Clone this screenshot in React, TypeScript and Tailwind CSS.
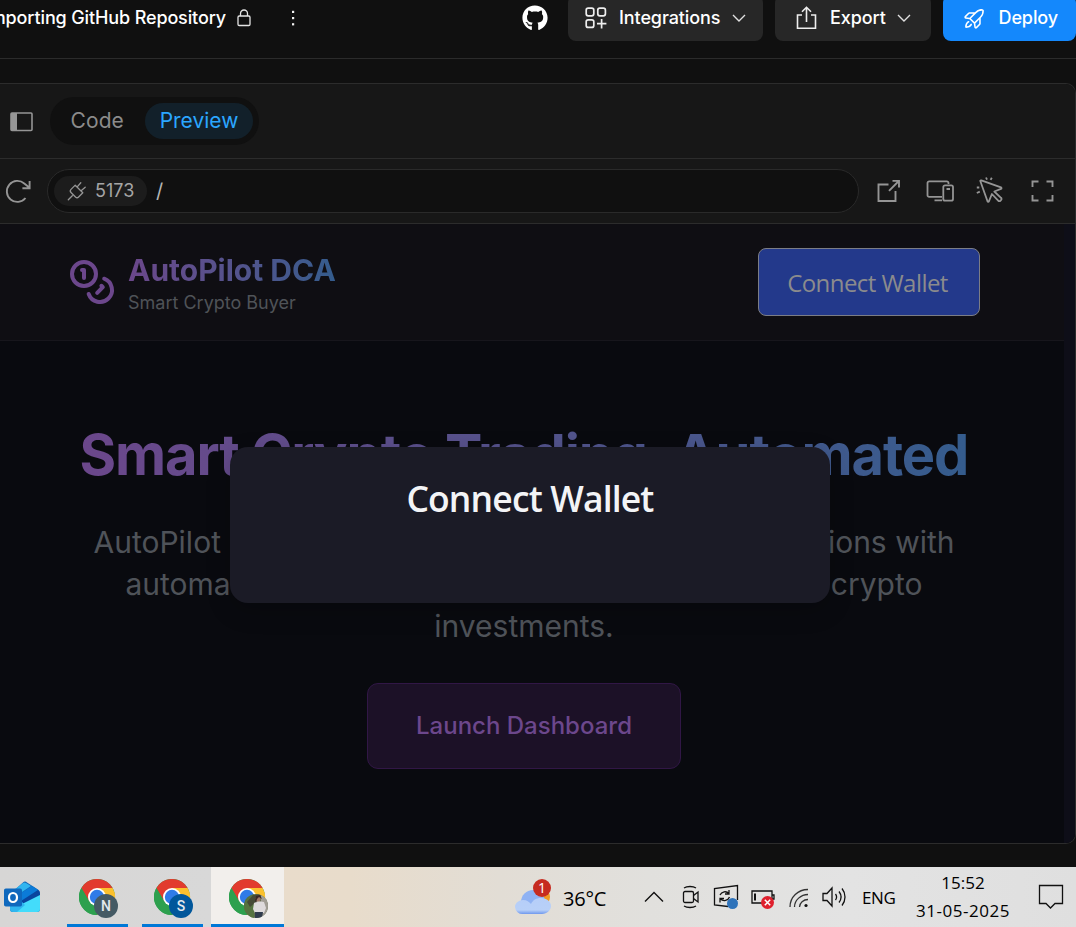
import React from "react";
import { Coins } from "lucide-react";
import { FaGithub } from "react-icons/fa";
import { PiRocketLaunch } from "react-icons/pi";

const ui = "font-['Inter',sans-serif]";
const sys = "font-['Open_Sans','Noto_Sans',sans-serif]";

function Chevron({ className }: { className: string }) {
  return (
    <svg className={className} width="14" height="8" viewBox="0 0 14 8" fill="none" stroke="#e0e0e0" strokeWidth="1.4">
      <path d="M1 1l6 6 6-6" />
    </svg>
  );
}

function Header() {
  return (
    <header className="h-[59px] overflow-hidden border-b border-[#2b2b2b] bg-[#101010]">
      <div className="-mt-[5px] flex h-[46px] items-center">
        <div className="flex w-[226px] shrink-0 justify-end overflow-hidden whitespace-nowrap pb-[2px] text-[18px] font-medium tracking-[-0.13px] text-white">
          <span>Importing GitHub Repository</span>
        </div>
        <svg className="ml-[11px] shrink-0" width="14" height="18" viewBox="0 0 14 18" fill="none" stroke="#e4e4e4" strokeWidth="1.3">
          <rect x="1" y="7" width="12" height="9.5" rx="1.2" />
          <path d="M3.5 7V4.5a3.5 3.5 0 0 1 7 0V7" />
        </svg>
        <svg className="ml-[40px] shrink-0" width="4" height="18" viewBox="0 0 4 18" fill="#f2f2f2">
          <rect x="1" y="1.8" width="2.2" height="2.2" />
          <rect x="1" y="8" width="2.2" height="2.2" />
          <rect x="1" y="14.2" width="2.2" height="2.2" />
        </svg>
        <FaGithub className="ml-[227px] shrink-0 text-white" size={26} />
        <button className="ml-[20px] flex h-[46px] w-[195px] shrink-0 items-center rounded-lg bg-[#272727] pl-[17px]">
          <svg width="22" height="22" viewBox="0 0 22 22" fill="none" stroke="#eee" strokeWidth="1.7">
            <rect x="1.2" y="1.2" width="7.6" height="7.6" rx="2" />
            <rect x="12.8" y="1.2" width="7.6" height="7.6" rx="2" />
            <rect x="1.2" y="12.8" width="7.6" height="7.6" rx="2" />
            <path d="M16.6 12v9.4M12 16.7h9.4" />
          </svg>
          <span className="ml-[12px] w-[101px] whitespace-nowrap pb-[2px] text-left text-[18px] font-medium tracking-[-0.1px] text-white">Integrations</span>
          <Chevron className="ml-[12px]" />
        </button>
        <button className="ml-[12px] flex h-[46px] w-[156px] shrink-0 items-center rounded-lg bg-[#272727] pl-[21px]">
          <svg width="21" height="24" viewBox="0 0 21 24" fill="none" stroke="#eee" strokeWidth="1.6">
            <path d="M6 9H1.5v13.2h18V9H15M10.5 16V1.5M6 5.8l4.5-4.500L15 5.800" />
          </svg>
          <span className="ml-[13px] w-[56px] whitespace-nowrap pb-[2px] text-left text-[18px] font-medium tracking-[-0.1px] text-white">Export</span>
          <Chevron className="ml-[11px]" />
        </button>
        <button className="ml-[12px] flex h-[46px] w-[133px] shrink-0 items-center rounded-lg bg-[#1488fc] pl-[19px]">
          <PiRocketLaunch size={25} className="text-white" />
          <span className="ml-[11.5px] whitespace-nowrap pb-[2px] text-[18px] font-medium tracking-[-0.1px] text-white">Deploy</span>
        </button>
      </div>
    </header>
  );
}

function TabBar() {
  return (
    <div className="flex h-[75px] items-center border-b border-[#2c2c2c] bg-[#171717]">
      <svg className="ml-[10px] mt-[2px]" width="23" height="20" viewBox="0 0 23 20" fill="none">
        <rect x="1" y="1" width="21" height="17.500" rx="1" stroke="#959595" strokeWidth="1.6" />
        <rect x="1" y="1" width="6" height="17.500" fill="#959595" />
      </svg>
      <div className="ml-[17px] flex h-[48px] w-[209px] items-center rounded-full bg-[#101010]">
        <span className="ml-[20.5px] w-[53.5px] whitespace-nowrap text-[21px] tracking-[0.1px] text-[#8b8b8b]">Code</span>
        <span className="ml-[21px] flex h-[36px] w-[108px] items-center justify-center whitespace-nowrap rounded-full bg-[#12202a] text-[21px] text-[#2ba6ff]">
          Preview
        </span>
      </div>
    </div>
  );
}

function AddressBar() {
  return (
    <div className="flex h-[65px] items-center border-b border-[#2c2c2c] bg-[#171717]">
      <svg className="ml-[4px] shrink-0" width="28" height="26" viewBox="0 0 28 26" fill="none" stroke="#959595" strokeWidth="1.9">
        <path d="M21.500 20A10.500 10.500 0 1 1 20.300 5.500l5.200 4.300M25.600 3v7.200h-7.200" />
      </svg>
      <div className="ml-[15px] flex h-[44px] w-[812px] shrink-0 items-center rounded-full border border-[#2a2a2a] bg-[#101010] pl-[6px]">
        <div className="flex h-[30px] w-[93px] items-center rounded-full bg-[#1c1c1c] pl-[13px]">
          <svg width="20" height="20" viewBox="0 0 20 20" fill="none" stroke="#959595" strokeWidth="1.300" strokeLinecap="round" strokeLinejoin="round">
            <path d="M1.300 18.700l4-4M8.200 4.200l7.600 7.600M7 5.400L4 8.400a2.200 2.200 0 0 0 0 3.100l4.500 4.500a2.200 2.200 0 0 0 3.100 0l3-3M13.800 1.800l-3.600 4.100M18.200 6.200l-4.100 3.600M7 5.400l1.200-1.200M14.600 13l1.200-1.200" />
          </svg>
          <span className="ml-[8px] whitespace-nowrap pb-[1px] text-[18px] text-[#a5a5a5]">5173</span>
        </div>
        <span className="ml-[9px] text-[20px] text-[#b5b5b5]">/</span>
      </div>
      <svg className="ml-[17px] shrink-0" width="24" height="24" viewBox="0 0 24 24" fill="none" stroke="#959595" strokeWidth="1.900">
        <path d="M12.500 5.500H2.500v16.500h17V12M16.500 1.900H23v6.700M22.800 2L13 11.800" />
      </svg>
      <svg className="ml-[26px] shrink-0" width="28" height="24" viewBox="0 0 28 24" fill="none" stroke="#959595" strokeWidth="1.800">
        <path d="M22.500 5V4a1.700 1.700 0 0 0-1.700-1.700H3.200A1.700 1.700 0 0 0 1.500 4v12.200a1.700 1.700 0 0 0 1.700 1.700H16M8.500 21.300H16M20.500 10h3.500" />
        <rect x="17.300" y="6.300" width="9.700" height="15.400" rx="1.700" />
      </svg>
      <svg className="ml-[22px] shrink-0" width="28" height="28" viewBox="0 0 28 28" fill="none" stroke="#959595" strokeWidth="1.800" strokeLinejoin="round">
        <path d="M4.300 4l7.200 20.300c.3.700 1.100.7 1.400 0l3-7.300 6.300 6.600a1.500 1.500 0 0 0 2.300 0l.5-.5a1.500 1.500 0 0 0 0-2.300L18.300 14.500l6.700-2.600c.7-.300.7-1.100 0-1.500L5.300 3.400c-.7-.200-1.200.100-1 .600z" />
        <path d="M10 .500l1 2.200M15.800.700l-1.200 2.200M.800 10.500h2.500M.800 16l3-1.300" />
      </svg>
      <svg className="ml-[26.5px] shrink-0" width="23" height="22" viewBox="0 0 23 22" fill="none" stroke="#959595" strokeWidth="1.900">
        <path d="M1.500 7V1.500H7.500M15.500 1.500h6V7M21.500 15v5.500h-6M7.500 20.500h-6V15" />
      </svg>
    </div>
  );
}

function WalletDialog() {
  return (
    <div className="absolute left-[230px] top-[223px] flex h-[156px] w-[600px] justify-center rounded-[18px] bg-[#1b1b26] pt-[26px] shadow-[0_8px_24px_rgba(0,0,0,0.2)]">
      <h2 className={`${sys} h-[50px] whitespace-nowrap text-[35.5px] font-semibold leading-[50px] tracking-[-0.85px] word-spacing-[2px] text-[#f3f4f6]`}>
        Connect Wallet
      </h2>
    </div>
  );
}

function Site() {
  return (
    <div className="relative flex h-[619px] bg-[#090a0f]">
      <div className="w-[1064px]">
        <div className="flex h-[117px] items-center border-b border-[#17161c] bg-[#0f0e13] pl-[68px]">
          <Coins size={48} strokeWidth={2} color="#6c478c" />
          <div className="ml-[12px] w-[300px] pt-[4px]">
            <div className="w-[207px] whitespace-nowrap bg-gradient-to-r from-[#6b478b] to-[#345c8d] bg-clip-text text-[30px] font-bold leading-[36px] text-transparent">
              AutoPilot DCA
            </div>
            <div className="whitespace-nowrap text-[18px] leading-[29px] text-[#4f5358]">Smart Crypto Buyer</div>
          </div>
          <button className={`${sys} ml-[330px] h-[68px] w-[222px] whitespace-nowrap rounded-lg border border-[#7b7d86] bg-[#23398b] pr-[3px] pt-[2px] text-[24px] tracking-[-0.55px] text-[#8b8b8d]`}>
            Connect Wallet
          </button>
        </div>
        <div className="flex w-[1048px] flex-col items-center pt-[80px]">
          <h1 className="w-[889px] whitespace-nowrap bg-gradient-to-r from-[#6b478b] to-[#345c8d] bg-clip-text text-[56px] font-bold leading-[68px] tracking-[-1.09px] text-transparent">
            Smart Crypto Trading, Automated
          </h1>
          <div className="mt-[32px] flex w-[861px] justify-between whitespace-nowrap text-[30px] leading-[42px] text-[#4f5359]">
            <span>AutoPilot DCA</span>
            <span>transactions with</span>
          </div>
          <div className="flex w-[797px] justify-between whitespace-nowrap text-[30px] leading-[42px] text-[#4f5359]">
            <span>automated</span>
            <span>crypto</span>
          </div>
          <div className="whitespace-nowrap text-[30px] leading-[42px] text-[#4f5359]">investments.</div>
          <button className="mt-[36px] h-[86px] w-[314px] whitespace-nowrap rounded-[11px] border border-[#311746] bg-[#1c1127] text-[24px] font-medium text-[#6c478c]">
            Launch Dashboard
          </button>
        </div>
      </div>
      <div className="flex-1 bg-[#0e0e18]" />
      <WalletDialog />
    </div>
  );
}

function ChromeLogo() {
  return (
    <svg width="40" height="40" viewBox="0 0 40 40">
      <circle cx="18" cy="18" r="18" fill="#2da04e" />
      <path d="M18 18L2.400 9A18 18 0 0 1 33.600 9z" fill="#e23b2e" />
      <path d="M18 9h15.600A18 18 0 0 1 18 36l8-13.500z" fill="#fbc02d" />
      <path d="M2.400 9l7.800 13.500L18 18V9z" fill="#e23b2e" />
      <path d="M2.400 9l8 13.500a9 9 0 0 0 15.600 0L18 36A18 18 0 0 1 2.400 9z" fill="#2da04e" />
      <circle cx="18" cy="18" r="9" fill="#fff" />
      <circle cx="18" cy="18" r="7.200" fill="#2f7be8" />
    </svg>
  );
}

function ProfilePhoto() {
  return (
    <svg width="24" height="24" viewBox="0 0 24 24">
      <defs>
        <clipPath id="face"><circle cx="12" cy="12" r="12" /></clipPath>
      </defs>
      <g clipPath="url(#face)">
        <rect width="24" height="24" fill="#5c6b4c" />
        <rect width="10" height="24" fill="#567340" />
        <rect x="17" width="7" height="24" fill="#a19d94" />
        <path d="M3 8l6-7 8-1-5 8-6 5z" fill="#464a36" />
        <path d="M10 9l4-2 6 1 2 6-2 5h-9l-2-4z" fill="#dedadb" />
        <circle cx="14" cy="5" r="2.600" fill="#a17b69" />
        <path d="M11 6l1-4 4-1 2 4-3-2-2 2-1 4z" fill="#3a2826" />
        <path d="M11 18h8l-1 6h-7z" fill="#303b4c" />
      </g>
    </svg>
  );
}

function TaskApp({ badge, color, className }: { badge?: string; color?: string; className: string }) {
  return (
    <div className={`relative h-[60px] shrink-0 border-b-[3px] border-[#0078d7] ${className}`}>
      <div className="pt-[12px]">
        <ChromeLogo />
      </div>
      <div className={`absolute left-[27px] top-[27px] flex h-6 w-6 items-center justify-center rounded-full font-['Roboto',sans-serif] text-[14px] font-medium text-[#e3e9ee] ${color ?? ""} ${badge ? "" : "ml-[6px]"}`}>
        {badge ?? <ProfilePhoto />}
      </div>
    </div>
  );
}

function Taskbar() {
  return (
    <footer className={`${sys} flex h-[60px] items-center overflow-hidden bg-[linear-gradient(90deg,#d7d6d5_0px,#d8d8d8_210px,#e9dccb_286px,#e8dccb_350px,#e2ddd5_500px,#e1e0dd_650px,#e3e3e3_850px,#dfdfdf_1076px)] text-black`}>
      <svg className="ml-[3px] shrink-0" width="38" height="34" viewBox="0 0 38 34">
        <path d="M7 14L20 2.500a3 3 0 0 1 4 0L35 9.500a4 4 0 0 1 2 3.500v16a3 3 0 0 1-3 3H10a3 3 0 0 1-3-3z" fill="#1267b8" />
        <path d="M7 13L20 3a3 3 0 0 1 3 0l5 3L7 20z" fill="#31b5ef" />
        <path d="M9 19L29 6l6 4-16 12z" fill="#0b7bd8" />
        <path d="M18 21l17-11q2 1.500 2 4v2L22 25z" fill="#09459e" />
        <path d="M15 26l4-2 18-9v14a3 3 0 0 1-3 3H10z" fill="#43dcfb" />
        <path d="M7 24l12-2 3 3-8 7h-4a3 3 0 0 1-3-3z" fill="#2fb6ef" />
        <rect x="1" y="8.500" width="18" height="18" rx="1.800" fill="#0f68bd" />
        <ellipse cx="10" cy="17.500" rx="4" ry="4.500" fill="none" stroke="#fff" strokeWidth="2.200" />
      </svg>
      <TaskApp className="ml-[26px] w-[61px] pl-[12px]" badge="N" color="bg-[#455a64]" />
      <TaskApp className="ml-[14px] w-[61px] pl-[12px]" badge="S" color="bg-[#01579b]" />
      <TaskApp className="ml-[8px] w-[73px] bg-[#f2efec] pl-[18px]" />
      <svg className="ml-[230px] mt-[2px] shrink-0" width="40" height="40" viewBox="0 0 40 40">
        <defs>
          <linearGradient id="cloud" x1="0" y1="0" x2="0" y2="1">
            <stop offset="0" stopColor="#b6cef8" />
            <stop offset=".75" stopColor="#b8d0f8" />
            <stop offset="1" stopColor="#6f98ed" />
          </linearGradient>
        </defs>
        <circle cx="27" cy="19" r="9" fill="#f19a22" />
        <circle cx="19" cy="24" r="12" fill="#8fb2f3" />
        <path d="M9 36a7.500 7.500 0 0 1-8-7c0-4 4-7 8-7 4 0 6 2 8 4 2-4 5-6 10-6 6 0 10 4 10 8s-4 8-9 8z" fill="url(#cloud)" />
        <circle cx="28" cy="10" r="9" fill="#c62b20" />
        <text x="28" y="15" textAnchor="middle" fontFamily="Open Sans" fontSize="14" fill="#fff">1</text>
      </svg>
      <span className="ml-[9px] w-[44px] whitespace-nowrap pt-[3px] text-[20px] tracking-[-0.2px]">36°C</span>
      <svg className="ml-[37px] shrink-0" width="20" height="12" viewBox="0 0 20 12" fill="none" stroke="#111" strokeWidth="1.400">
        <path d="M1 10.500L10 1.500l9 9" />
      </svg>
      <svg className="ml-[18px] shrink-0" width="18" height="24" viewBox="0 0 18 24" fill="none" stroke="#111" strokeWidth="1.300">
        <rect x="1.500" y="6.500" width="10" height="11" rx="1.500" />
        <path d="M11.500 10.500l4.500-3.500v10L11.500 13.500M2 3c3-2 9-2 12 0M2 21c3 2 9 2 12 0" />
      </svg>
      <svg className="ml-[12px] shrink-0" width="28" height="28" viewBox="0 0 28 28" fill="none" stroke="#111" strokeWidth="1.300">
        <path d="M16 23.500L2.500 22V5.500L25.500 2.500V17" />
        <path d="M8 12a5.500 5.500 0 0 1 9-1.500M17 7v4h-4M17.500 14a5.500 5.500 0 0 1-9 2M8 19.500v-4h4" />
        <circle cx="20.500" cy="20.500" r="5.500" fill="#2f73ba" stroke="none" />
      </svg>
      <svg className="ml-[10px] mt-[1px] shrink-0" width="28" height="24" viewBox="0 0 28 24" fill="none" stroke="#111" strokeWidth="1.300">
        <path d="M2 5h20v12H2zM22 9h2v4h-2" />
        <path d="M5 7.500v7" strokeWidth="2" />
        <circle cx="17.500" cy="16.500" r="6.500" fill="#df202d" stroke="none" />
        <path d="M14.800 13.800l5.400 5.400M20.200 13.800l-5.400 5.400" stroke="#fff" strokeWidth="1.500" />
      </svg>
      <svg className="ml-[11px] mt-[2px] shrink-0" width="20" height="20" viewBox="0 0 20 20" fill="none" stroke="#333" strokeWidth="1.300">
        <path d="M1 19C1 9 9 1.500 19 1.500M5.500 19C5.500 12 12 6.500 19 6.500M10.500 19c0-4 4-7.500 8.500-7.500" />
        <circle cx="17" cy="17.500" r="1.600" fill="#111" stroke="none" />
      </svg>
      <svg className="ml-[13px] shrink-0" width="25" height="22" viewBox="0 0 25 22" fill="none" stroke="#111" strokeWidth="1.300">
        <path d="M1 7.500h4l5-5.500v18l-5-5.500H1zM13.500 8c1.300 1.800 1.300 4.200 0 6M17 5.500c2.500 3.300 2.500 7.700 0 11M20 2.500c4 5 4 12 0 17" />
      </svg>
      <span className="ml-[15px] w-[34px] whitespace-nowrap pt-[2px] text-[17px] tracking-[-0.4px]">ENG</span>
      <div className="ml-[14px] flex w-[106px] flex-col items-center whitespace-nowrap text-[17px] leading-[28px]">
        <span>15:52</span>
        <span className="tracking-[0.55px]">31-05-2025</span>
      </div>
      <svg className="ml-[22px] shrink-0" width="26" height="26" viewBox="0 0 26 26" fill="none" stroke="#111" strokeWidth="1.300">
        <path d="M1.500 1.500h23v18h-7.500l-4.500 4.500-4.500-4.500H1.500z" />
      </svg>
    </footer>
  );
}

export default function App() {
  return (
    <div className={`${ui} flex h-[927px] w-[1076px] flex-col overflow-hidden bg-[#101010]`}>
      <Header />
      <main className="mb-[23px] mt-[24px] h-[761px] overflow-hidden rounded-r-[10px] border-y border-r border-[#2c2c2c]">
        <TabBar />
        <AddressBar />
        <Site />
      </main>
      <Taskbar />
    </div>
  );
}
